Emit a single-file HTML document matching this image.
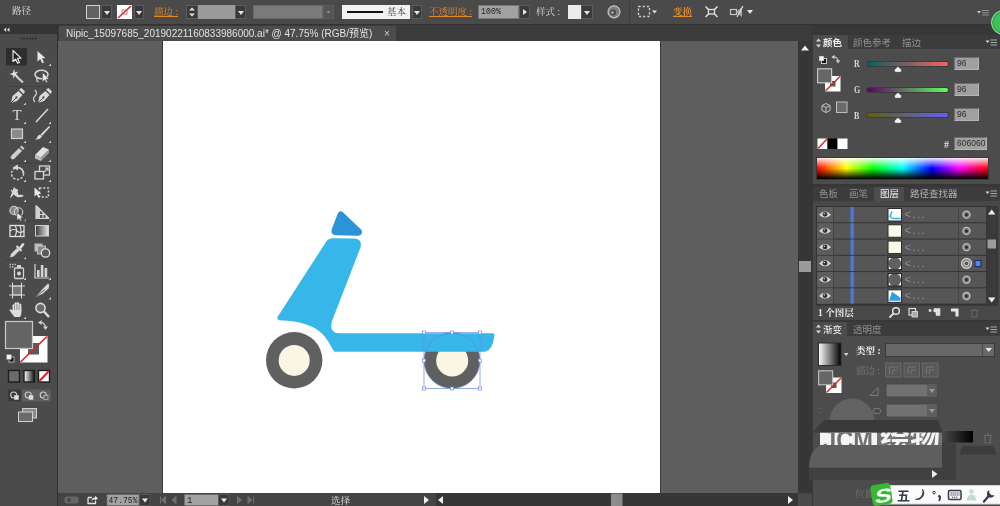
<!DOCTYPE html>
<html><head><meta charset="utf-8">
<style>
*{box-sizing:border-box;margin:0;padding:0}
html,body{width:1000px;height:506px;overflow:hidden;background:#3b3b3b;font-family:"Liberation Sans","Noto Sans CJK SC",sans-serif;font-size:11px;color:#ddd}
.a{position:absolute}
#top{left:0;top:0;width:1000px;height:25px;background:#4a4a4a;border-bottom:1px solid #333}
#tools{left:0;top:25px;width:57px;height:481px;background:#4b4b4b;box-shadow:1px 0 0 #2e2e2e}
#toolshead{left:0;top:25px;width:57px;height:9px;background:#353535}
#tabbar{left:58px;top:26px;width:754px;height:15px;background:#3b3b3b}
#tab{left:59px;top:26px;width:337px;height:15px;background:#4c4c4c}
#canvas{left:58px;top:41px;width:740px;height:452px;background:#5e5e5e}
#art{left:162px;top:41px;width:499px;height:452px;background:#fff;border-left:1px solid #3a3a3a;border-right:1px solid #3a3a3a}
#vscroll{left:798px;top:41px;width:14px;height:452px;background:#363636}
#status{left:58px;top:493px;width:754px;height:13px;background:#444}
#dock{left:812px;top:25px;width:188px;height:481px;background:#373737}
.panel{background:#4c4c4c}
.ptab{background:#3c3c3c}

.sw{position:absolute;top:5px;height:14px}
.dd{position:absolute;top:5px;height:14px;background:#3a3a3a;border:1px solid #5c5c5c}
.dd:after{content:"";position:absolute;left:50%;top:5px;margin-left:-3px;border:3px solid transparent;border-top:4px solid #e6e6e6;border-bottom:0}
.or{position:absolute;color:#e08a2e;text-decoration:underline;font-family:"Liberation Serif","Noto Serif CJK SC",serif;font-size:9.5px;line-height:14px;top:5px;white-space:nowrap}
.lt{position:absolute;color:#d8d8d8;font-family:"Liberation Serif","Noto Serif CJK SC",serif;font-size:9.5px;line-height:14px;white-space:nowrap}

.pt{position:absolute;font-size:9.5px;line-height:13px;white-space:nowrap;color:#909090}
.pt.on{color:#f0f0f0;font-weight:bold}
.vb{position:absolute;background:#a0a0a0;border:1px solid #6e6e6e;border-right-color:#b5b5b5;border-bottom-color:#b5b5b5;color:#2a2a2a;font-size:8.5px;line-height:11px;padding-left:2px}
.sl{position:absolute;left:867px;width:81px;height:4px;border-radius:2px;box-shadow:0 0 0 1px #3c3c3c}
.rgb{position:absolute;left:854px;font-family:"Liberation Serif",serif;font-size:10px;line-height:10px;color:#d8d8d8;font-weight:bold;transform:scaleX(.8);transform-origin:0 0}
</style></head><body>
<div id="wrap" style="position:absolute;left:0;top:0;width:1000px;height:506px;will-change:transform">
<div id="top" class="a"></div>
<div id="tools" class="a"></div>
<div id="toolshead" class="a"></div>
<div id="tabbar" class="a"></div>
<div id="tab" class="a"></div>
<div id="canvas" class="a"></div>
<div id="art" class="a"></div>
<div id="vscroll" class="a"></div>
<div id="status" class="a"></div>
<div id="dock" class="a"></div>

<!-- ART -->
<svg class="a" style="left:162px;top:41px" width="498" height="452" viewBox="162 41 498 452">
<circle cx="294.2" cy="360.2" r="28.2" fill="#606060"/><circle cx="294.2" cy="360.4" r="15.5" fill="#faf6e4"/>
<circle cx="452" cy="360.5" r="28" fill="#606060"/><circle cx="452.2" cy="360.5" r="16" fill="#faf6e4"/>
<path d="M332.5 238.3L354.5 238.5Q362.5 239 360.5 247.5L332 321Q329 332.5 338.5 333.2L493 333.2Q495 333.2 494.3 336Q493 350 485 351.7L334.5 351.8C326 340 324 322 279.5 320.3Q275.5 319.5 278.5 315.5L326 242Q328.5 238.3 332.5 238.3Z" fill="#37b6e9"/>
<path d="M338 213Q340.2 209.8 343.2 212.6L361 229.5Q363.5 232.5 360.5 235Q359.5 235.8 357.5 235.8L336.5 235.3Q330 234.8 331.8 229Z" fill="#2d93d8"/>
<circle cx="452" cy="360.5" r="28" fill="none" stroke="#5d82dc" stroke-width=".7" opacity=".8"/>
<rect x="424" y="332.5" width="56" height="56" fill="none" stroke="#6a8ce0" stroke-width=".7"/>
<rect x="422.5" y="331.0" width="3" height="3" fill="#fff" stroke="#6a8ce0" stroke-width=".7"/>
<rect x="450.5" y="331.0" width="3" height="3" fill="#fff" stroke="#6a8ce0" stroke-width=".7"/>
<rect x="478.5" y="331.0" width="3" height="3" fill="#fff" stroke="#6a8ce0" stroke-width=".7"/>
<rect x="422.5" y="359.0" width="3" height="3" fill="#fff" stroke="#6a8ce0" stroke-width=".7"/>
<rect x="478.5" y="359.0" width="3" height="3" fill="#fff" stroke="#6a8ce0" stroke-width=".7"/>
<rect x="422.5" y="387.0" width="3" height="3" fill="#fff" stroke="#6a8ce0" stroke-width=".7"/>
<rect x="450.5" y="387.0" width="3" height="3" fill="#fff" stroke="#6a8ce0" stroke-width=".7"/>
<rect x="478.5" y="387.0" width="3" height="3" fill="#fff" stroke="#6a8ce0" stroke-width=".7"/>
</svg>
<!-- /ART -->

<!-- STATUS -->
<svg class="a" style="left:58px;top:493px" width="754" height="13" viewBox="58 493 754 13">
<rect x="436" y="493" width="362" height="13" fill="#363636"/>
<rect x="64.5" y="496.5" width="14" height="7" rx="2" fill="#666"/><circle cx="69" cy="500" r="2" fill="#4a4a4a"/>
<path d="M88 497.5h4M88 497.5v6h7.5v-2.500" fill="none" stroke="#e0e0e0" stroke-width="1.3"/><path d="M91.500 501Q92 497.500 95 497.500V495.800L98 498.300L95 500.800V499.200Q93 499.200 91.500 501Z" fill="#e8e8e8"/>
<rect x="107" y="494.500" width="32" height="11" fill="#a2a2a2" stroke="#6a6a6a" stroke-width=".8"/>
<text x="108.500" y="503.300" font-family="Liberation Mono,monospace" font-size="9" fill="#222" textLength="29" lengthAdjust="spacingAndGlyphs">47.75%</text>
<rect x="139.500" y="494.500" width="10.500" height="11" fill="#3a3a3a" stroke="#5c5c5c" stroke-width=".8"/><path d="M142 498.500H148L145 502.500Z" fill="#eee"/>
<path d="M160.500 496.500V503.500M165.500 496.500L161.500 500L165.500 503.500ZM176 496.500L172 500L176 503.500Z" fill="#6e6e6e" stroke="#6e6e6e" stroke-width="1"/>
<rect x="184.500" y="494.500" width="34" height="11" fill="#a2a2a2" stroke="#6a6a6a" stroke-width=".8"/><text x="187" y="503.300" font-family="Liberation Mono,monospace" font-size="9" fill="#222">1</text>
<rect x="218.500" y="494.500" width="10.500" height="11" fill="#3a3a3a" stroke="#5c5c5c" stroke-width=".8"/><path d="M221 498.500H227L224 502.500Z" fill="#eee"/>
<path d="M237.500 496.500L241.500 500L237.500 503.500ZM248 496.500L252 500L248 503.500ZM253.500 496.500V503.500" fill="#6e6e6e" stroke="#6e6e6e" stroke-width="1"/>
<text x="331" y="503.500" font-family="Liberation Serif,Noto Serif CJK SC,serif" font-size="9.500" fill="#e0e0e0">选择</text>
<path d="M424 496L429 500L424 504Z" fill="#eee"/><path d="M443 496L438 500L443 504Z" fill="#eee"/>
<rect x="611" y="493.500" width="11.500" height="12.500" fill="#8c8c8c"/>
<path d="M788 496L793 500L788 504Z" fill="#eee"/><rect x="798" y="494" width="13.500" height="12" fill="#4a4a4a"/>
</svg>
<div class="a" style="left:799px;top:261px;width:11.5px;height:11px;background:#9a9a9a"></div>
<svg class="a" style="left:798px;top:41px" width="14" height="14"><path d="M3 9.500L7 4.500L11 9.500Z" fill="#eee"/></svg>
<!-- /STATUS -->
<!-- TOPBAR -->
<div class="a lt" style="left:12px;top:4px;font-size:9.5px;color:#e8e8e8">路径</div>
<div class="sw" style="left:86px;width:14px;background:#616161;border:1px solid #cfcfcf"></div>
<div class="dd" style="left:101px;width:11px"></div>
<svg class="a" style="left:117px;top:5px" width="15" height="14"><rect x="0" y="0" width="15" height="14" fill="#fff"/><line x1="1" y1="13" x2="14" y2="1" stroke="#d8232a" stroke-width="1.6"/><rect x="5" y="5" width="5" height="4" fill="none" stroke="#b55" stroke-width="0.8"/></svg>
<div class="dd" style="left:134px;width:10px"></div>
<div class="or" style="left:154px">描边 :</div>
<div class="a" style="left:186px;top:5px;width:12px;height:14px;background:#3a3a3a;border:1px solid #5c5c5c"></div>
<svg class="a" style="left:186px;top:5px" width="12" height="14"><path d="M3 5.5L6 2.5L9 5.5Z M3 8.5L6 11.5L9 8.5Z" fill="#e0e0e0"/></svg>
<div class="sw" style="left:198px;width:37px;background:#9a9a9a"></div>
<div class="dd" style="left:235px;width:11px"></div>
<div class="sw" style="left:253px;width:70px;background:#7b7b7b;border:1px solid #666"></div>
<svg class="a" style="left:323px;top:5px" width="11" height="14"><rect x=".5" y=".5" width="10" height="13" fill="#545454" stroke="#5c5c5c"/><path d="M3.500 6H7.500L5.500 8.500Z" fill="#8c8c8c"/></svg>
<div class="sw" style="left:342px;width:68px;height:14px;background:#f2f2f2"></div>
<div class="a" style="left:347px;top:11px;width:36px;height:2px;background:#111"></div>
<div class="a" style="left:387px;top:5px;font-family:'Liberation Serif','Noto Serif CJK SC',serif;font-size:9.5px;line-height:14px;color:#444">基本</div>
<div class="dd" style="left:412px;width:10px"></div>
<div class="or" style="left:429px">不透明度 :</div>
<div class="sw" style="left:478px;width:41px;background:#a2a2a2;border:1px solid #777;color:#222;font-family:'Liberation Mono',monospace;font-size:8.3px;line-height:11px;padding-left:2px">100%</div>
<div class="a" style="left:519px;top:5px;width:11px;height:14px;background:#3a3a3a;border:1px solid #5c5c5c"></div>
<svg class="a" style="left:519px;top:5px" width="11" height="14"><path d="M4 4L8 7L4 10Z" fill="#e6e6e6"/></svg>
<div class="a lt" style="left:536px;top:5px">样式 :</div>
<div class="sw" style="left:568px;width:13px;background:#ebebeb"></div>
<div class="dd" style="left:581px;width:12px"></div>
<svg class="a" style="left:606px;top:4px" width="16" height="16"><circle cx="8" cy="7.800" r="6" fill="#7e7e7e" stroke="#c4c4c4" stroke-width="1.200"/><circle cx="7" cy="8.500" r="3" fill="#4a4a4a"/><circle cx="6.500" cy="8.500" r="1.200" fill="#bbb"/></svg>
<div class="a" style="left:629px;top:2px;width:1px;height:20px;background:#3c3c3c"></div>
<svg class="a" style="left:637px;top:5px" width="24" height="14"><rect x="1.5" y="1.5" width="11" height="10" fill="none" stroke="#d0d0d0" stroke-width="1.4" stroke-dasharray="2.2 2"/><path d="M15 5.5L20 5.5L17.5 8.5Z" fill="#e6e6e6"/></svg>
<div class="or" style="left:673px;font-weight:bold">变换</div>
<svg class="a" style="left:704px;top:4px" width="16" height="16"><rect x="4.500" y="5.500" width="6" height="4.500" fill="none" stroke="#e0e0e0" stroke-width="1.300"/><path d="M1.500 2.500L4.500 5.500M13.500 2.500L10.500 5.500M1.500 13L4.500 10M13.500 13L10.500 10" stroke="#e0e0e0" stroke-width="1.500"/></svg>
<svg class="a" style="left:728px;top:4px" width="28" height="16"><rect x="2.5" y="5.5" width="6" height="5" fill="none" stroke="#c8c8c8" stroke-width="1.2"/><path d="M8 8L14 3L14 13Z" fill="#aaa"/><path d="M9 13L15 2" stroke="#ddd" stroke-width="1.2"/><path d="M19 6L25 6L22 10Z" fill="#e6e6e6"/></svg>
<svg class="a" style="left:975px;top:8px" width="16" height="10"><path d="M2 3L6 3L4 5.500Z" fill="#d0d0d0"/><path d="M7 2.500H14M7 4.800H14M7 7H14" stroke="#a4a4a4" stroke-width=".800"/></svg>
<div class="a" style="left:991px;top:10px;width:25px;height:25px;border-radius:13px;background:#3fc25a;border:1.500px solid #9be6a8;box-shadow:inset 0 0 0 1.500px #35a84c"></div>
<!-- /TOPBAR -->

<!-- TAB -->
<div id="tabtxt" class="a" style="left:66px;top:27px;font-size:10px;line-height:13px;color:#e2e2e2;white-space:nowrap">Nipic_15097685_20190221160833986000.ai* @ 47.75% (RGB/预览)</div>
<div class="a" style="left:384px;top:27px;font-size:10px;line-height:13px;color:#d0d0d0">×</div>
<!-- /TAB -->
<!-- TOOLS -->
<svg class="a" style="left:0;top:0" width="58" height="506" viewBox="0 0 58 506">
<rect x="6" y="48" width="21" height="17.5" fill="#2e2e2e"/>
<g transform="translate(17,57)"><path d="M-4 -6.5L-4 4.5L-1.3 2L0.6 6.3L2.4 5.5L0.5 1.3L4 1.2Z" fill="#222" stroke="#f0f0f0" stroke-width="1.1" stroke-linejoin="round"/></g>
<g transform="translate(42,57)"><path d="M-4.5 -6L-4.5 4.5L-1.8 2L0.2 6.3L2 5.5L0 1.3L3.5 1.2Z" fill="#e8e8e8"/></g><path d="M51 63.5L51 66L48.5 66Z" fill="#cfcfcf"/>
<g transform="translate(17,76)"><path d="M-1 0L6 6.5" stroke="#d4d4d4" stroke-width="2"/><path d="M-3 -7L-2 -3.6L1.5 -4.5L-1 -2L1.5 1L-2.2 -0.3L-3.5 3L-4 -0.8L-7.5 -2L-4.2 -3Z" fill="#e0e0e0"/></g>
<g transform="translate(42,76)"><ellipse cx="-0.5" cy="-1.5" rx="6.5" ry="4.2" fill="none" stroke="#d4d4d4" stroke-width="1.6"/><path d="M-5 1.5Q-6 5 -3.5 6" fill="none" stroke="#d4d4d4" stroke-width="1.3"/><path d="M0.5 -3.5L0.5 6L2.8 3.8L4.2 6.8L5.6 6L4.2 3.2L7 3Z" fill="#e8e8e8" stroke="#4b4b4b" stroke-width=".5"/></g>
<g transform="translate(17,96)"><path d="M-6 7L-4.5 0L1.5 -5L5.5 -1L0 5Z" fill="#d8d8d8"/><path d="M-6 7L-1 2" stroke="#4b4b4b" stroke-width="1"/><circle cx="-0.6" cy="1.4" r="1.1" fill="#4b4b4b"/><path d="M2 -6.5L4.5 -8L8 -4.5L6.5 -2Z" fill="#d8d8d8"/></g><path d="M26 102.5L26 105L23.5 105Z" fill="#cfcfcf"/>
<g transform="translate(42,96)"><g transform="translate(2,0)"><path d="M-6 7L-4.5 0L1.5 -5L5.5 -1L0 5Z" fill="#d8d8d8"/><path d="M-6 7L-1 2" stroke="#4b4b4b" stroke-width="1"/><circle cx="-0.6" cy="1.4" r="1.1" fill="#4b4b4b"/><path d="M2 -6.5L4.5 -8L8 -4.5L6.5 -2Z" fill="#d8d8d8"/></g><path d="M-7 -6Q-4 -3 -7 0T-7 6" fill="none" stroke="#d4d4d4" stroke-width="1.2"/></g>
<g transform="translate(17,115)"><text x="0" y="5" font-family="Liberation Serif,serif" font-size="15" fill="#dcdcdc" text-anchor="middle">T</text></g><path d="M26 121.5L26 124L23.5 124Z" fill="#cfcfcf"/>
<g transform="translate(42,115)"><path d="M-6 7L6 -6" stroke="#d8d8d8" stroke-width="1.5"/></g><path d="M51 121.5L51 124L48.5 124Z" fill="#cfcfcf"/>
<g transform="translate(17,134)"><rect x="-5.500" y="-5" width="11" height="9.500" fill="#8a8a8a" stroke="#d0d0d0" stroke-width="1.200"/></g><path d="M26 140.5L26 143L23.5 143Z" fill="#cfcfcf"/>
<g transform="translate(42,134)"><path d="M7 -8L8 -7L0 2L-1.5 0.5Z" fill="#dcdcdc"/><path d="M-1.8 0.8L0 2.6Q-2 6 -7 5.5Q-4.5 4.5 -4.5 2.5Q-3.5 0.5 -1.8 0.8Z" fill="#dcdcdc"/></g><path d="M51 140.5L51 143L48.5 143Z" fill="#cfcfcf"/>
<g transform="translate(17,153)"><path d="M-7 7L-6 3L2 -5L5 -2L-3 6Z" fill="#d0d0d0"/><path d="M3 -6L4.5 -7.5L7.5 -4.5L6 -3Z" fill="#d0d0d0"/><path d="M-7 7L-5.6 5.6" stroke="#333" stroke-width="1.5"/></g><path d="M26 159.5L26 162L23.5 162Z" fill="#cfcfcf"/>
<g transform="translate(42,153)"><path d="M-7 2L1 -6L7 -3.5L-1 4.5Z" fill="#e0e0e0"/><path d="M-7 2L-1 4.5L-1 8L-7 5.5Z" fill="#bdbdbd"/><path d="M-1 4.5L7 -3.5L7 0L-1 8Z" fill="#9a9a9a"/></g><path d="M51 159.5L51 162L48.5 162Z" fill="#cfcfcf"/>
<g transform="translate(17,173)"><circle cx="0.5" cy="0.5" r="6" fill="none" stroke="#d4d4d4" stroke-width="1.5" stroke-dasharray="2.2 1.6"/><path d="M0.5 -5.5A6 6 0 0 1 6.5 0.5" fill="none" stroke="#d4d4d4" stroke-width="1.6"/><path d="M-4.5 -5.5L1 -8.5L1 -2.5Z" fill="#d4d4d4"/></g><path d="M26 179.5L26 182L23.5 182Z" fill="#cfcfcf"/>
<g transform="translate(42,173)"><rect x="-2.5" y="-7" width="10" height="9" fill="none" stroke="#d4d4d4" stroke-width="1.3"/><rect x="-7" y="-1.5" width="8.5" height="7.5" fill="#4b4b4b" stroke="#d4d4d4" stroke-width="1.3"/><path d="M2 -1L5.5 -4.5M3 -5L6 -5L6 -2" stroke="#d4d4d4" stroke-width="1.1" fill="none"/></g><path d="M51 179.5L51 182L48.5 182Z" fill="#cfcfcf"/>
<g transform="translate(17,193)"><path d="M-7 5Q-5 -1 -3 -6Q-1 -3 1 -4Q0 0 2 2Q5 1 7 3Q3 5 0 4Q-2 2 -3 1Q-5 4 -7 5Z" fill="#d8d8d8"/><path d="M-6 -3Q-3 0 -1 3" stroke="#d8d8d8" stroke-width="1.2" fill="none"/></g><path d="M26 199.5L26 202L23.5 202Z" fill="#cfcfcf"/>
<g transform="translate(42,193)"><rect x="-2.5" y="-5" width="9" height="9" fill="none" stroke="#d4d4d4" stroke-width="1.5" stroke-dasharray="2 1.8"/><path d="M-7.5 -5.5L-7.5 3.5L-5.2 1.5L-3.8 4.5L-2.2 3.8L-3.6 1L-0.8 0.8Z" fill="#e8e8e8"/></g>
<g transform="translate(17,212.5)"><circle cx="-3" cy="-2" r="4.2" fill="#8a8a8a" stroke="#d0d0d0" stroke-width="1.1"/><circle cx="1.5" cy="-0.5" r="4.2" fill="none" stroke="#d0d0d0" stroke-width="1.1"/><path d="M0 0L0 8L2 6L3.4 9L5 8.2L3.6 5.5L6.2 5.2Z" fill="#e8e8e8" stroke="#4b4b4b" stroke-width=".5"/></g><path d="M26 219.0L26 221.5L23.5 221.5Z" fill="#cfcfcf"/>
<g transform="translate(42,212.5)"><path d="M-6 -7L-6 6L7 6M-6 -7L7 6M-2.5 -3.5L-2.5 6M1 0L1 6M4 3L4 6M-6 -2L-1 -2M-6 2L3 2" stroke="#d4d4d4" stroke-width="1.2" fill="none"/><path d="M-6 -7L-6 6L-2.5 6L-2.5 -3.5Z" fill="#cfcfcf"/></g><path d="M51 219.0L51 221.5L48.5 221.5Z" fill="#cfcfcf"/>
<g transform="translate(17,231)"><rect x="-7" y="-5.5" width="14" height="11" fill="#4a4a4a" stroke="#e0e0e0" stroke-width="1.3"/><path d="M-7 0Q-3 -3 0 0T7 0M-2 -5.5Q1 -1 -2 5.5M3 -5.5Q5 0 3 5.5" fill="none" stroke="#e0e0e0" stroke-width="1.1"/></g>
<defs><linearGradient id="tg" x1="0" x2="1"><stop offset="0" stop-color="#3a3a3a"/><stop offset="1" stop-color="#e8e8e8"/></linearGradient><linearGradient id="wb" x1="0" x2="1"><stop offset="0" stop-color="#fff"/><stop offset="1" stop-color="#111"/></linearGradient></defs>
<g transform="translate(42,231)"><rect x="-6.5" y="-5.5" width="13" height="10.5" fill="url(#tg)" stroke="#d0d0d0" stroke-width="1"/></g>
<g transform="translate(17,250.5)"><path d="M-7 7L-6 3.5L0 -2.5L2.5 0L-3.5 6Z" fill="#d8d8d8"/><path d="M-0.5 -4.5L4.5 0.5" stroke="#e0e0e0" stroke-width="2"/><path d="M2 -3L5 -7Q7 -8 7.5 -6L4 -1.5Z" fill="#e0e0e0"/></g><path d="M26 257.0L26 259.5L23.5 259.5Z" fill="#cfcfcf"/>
<g transform="translate(42,250.5)"><rect x="-7.5" y="-7" width="8" height="8" fill="#bcbcbc"/><rect x="-4.5" y="-4.5" width="8" height="8" fill="#8a8a8a" stroke="#d0d0d0" stroke-width=".8"/><circle cx="3.5" cy="2.5" r="4.2" fill="#5a5a5a" stroke="#e0e0e0" stroke-width="1.3"/></g>
<g transform="translate(17,271)"><rect x="-2.5" y="-3" width="9" height="10.5" rx="1" fill="#4b4b4b" stroke="#d4d4d4" stroke-width="1.3"/><circle cx="2" cy="2.5" r="2" fill="#d4d4d4"/><rect x="0" y="-6" width="4" height="3" fill="#d4d4d4"/><path d="M-7.5 -6.5h1.5M-5 -6.5h1.5M-7.5 -4h1.5M-5 -4h1.5M-2.5 -6.5h1.5" stroke="#bdbdbd" stroke-width="1.3"/></g><path d="M26 277.5L26 280L23.5 280Z" fill="#cfcfcf"/>
<g transform="translate(42,271)"><path d="M-7 -7L-7 7L7 7" fill="none" stroke="#d4d4d4" stroke-width="1.2"/><rect x="-5" y="-1" width="2.6" height="7" fill="#d4d4d4"/><rect x="-1.2" y="-6" width="2.6" height="12" fill="#d4d4d4"/><rect x="2.6" y="-3" width="2.6" height="9" fill="#d4d4d4"/></g><path d="M51 277.5L51 280L48.5 280Z" fill="#cfcfcf"/>
<g transform="translate(17,290.5)"><rect x="-4.5" y="-4.5" width="9" height="9" fill="#777" stroke="#d4d4d4" stroke-width="1.1"/><path d="M-8 -4.5H8M-8 4.5H8M-4.5 -8V8M4.5 -8V8" stroke="#d4d4d4" stroke-width="1.1"/></g>
<g transform="translate(42,290.5)"><path d="M-7 7L2 -3L6 -7Q8 -6 6.5 -2L1 3Z" fill="#d8d8d8"/><path d="M-7 7L3 -1" stroke="#4b4b4b" stroke-width=".8"/></g><path d="M51 297.0L51 299.5L48.5 299.5Z" fill="#cfcfcf"/>
<g transform="translate(17,310)"><path d="M-2.5 7Q-6 3 -7.5 0Q-6.5 -1.5 -4.5 0.5L-4.5 -5Q-3.5 -6.5 -2.6 -5L-2.4 -7Q-1.2 -8.3 -0.3 -7L-0.1 -7.5Q1.2 -8.5 2 -7L2.2 -6Q3.5 -7 4.3 -5.5L4.6 1Q4.5 5 3 7Z" fill="#dcdcdc"/><path d="M-2.5 -4.5V0M-0.2 -6.5V0M2.1 -5.5V0" stroke="#777" stroke-width=".7"/></g><path d="M26 316.5L26 319L23.5 319Z" fill="#cfcfcf"/>
<g transform="translate(42,310)"><circle cx="-1.5" cy="-2" r="4.6" fill="#6a6a6a" stroke="#dcdcdc" stroke-width="1.6"/><path d="M2 1.5L7 7" stroke="#dcdcdc" stroke-width="2.4"/></g>
<path d="M5 86.5H53" stroke="#424242" stroke-width="1"/>
<path d="M5 163H53" stroke="#424242" stroke-width="1"/>
<path d="M5 221H53" stroke="#424242" stroke-width="1"/>
<path d="M5 260H53" stroke="#424242" stroke-width="1"/>
<path d="M6.200 27.500L3.700 29.800L6.200 32.100ZM9.500 27.500L7 29.800L9.500 32.100Z" fill="#d8d8d8"/>
<path d="M20 38.5H37" stroke="#333" stroke-width="2" stroke-dasharray="2 1"/>
<rect x="20" y="336" width="27.5" height="26.5" fill="#fff"/><rect x="28" y="343" width="11" height="11.5" fill="#5a5a5a"/><path d="M20.5 362L47 336.5" stroke="#d8232a" stroke-width="1.6"/>
<rect x="5.5" y="321.5" width="27" height="27" fill="#646464" stroke="#c8c8c8" stroke-width="1.2"/>
<path d="M40 322.5Q44 322 45.5 327" fill="none" stroke="#d0d0d0" stroke-width="1.2"/><path d="M38 322.5L41.5 320L41.5 325Z M45.5 330L43 326.5L48 326.5Z" fill="#d0d0d0"/>
<rect x="9" y="357" width="5" height="5" fill="#111" stroke="#d0d0d0" stroke-width=".8"/><rect x="6.5" y="354.5" width="5" height="5" fill="#f4f4f4" stroke="#777" stroke-width=".5"/>
<rect x="8.5" y="370.5" width="11" height="11.5" fill="#6c6c6c" stroke="#1e1e1e" stroke-width="1.4"/>
<rect x="24" y="370.5" width="10.5" height="11.5" fill="url(#wb)" stroke="#1e1e1e" stroke-width="1.4"/>
<rect x="38.5" y="370.5" width="11" height="11.5" fill="#fff" stroke="#1e1e1e" stroke-width="1.4"/><path d="M39.5 381L48.5 371.5" stroke="#d8232a" stroke-width="2"/>
<rect x="8" y="389.5" width="43" height="12" fill="#5e5e5e"/><rect x="8" y="389.5" width="13.5" height="12" fill="#393939"/>
<circle cx="13.7" cy="395" r="3" fill="none" stroke="#d0d0d0" stroke-width="1.1"/><rect x="14.5" y="395.5" width="4" height="4" fill="#e0e0e0" stroke="#d0d0d0" stroke-width=".6"/>
<circle cx="28.2" cy="395" r="3" fill="none" stroke="#d0d0d0" stroke-width="1.1"/><rect x="29" y="395.5" width="4" height="4" fill="#e0e0e0" stroke="#d0d0d0" stroke-width=".6"/>
<circle cx="43.2" cy="395" r="3" fill="none" stroke="#d0d0d0" stroke-width="1.1"/><rect x="44" y="395.5" width="4" height="4" fill="#5e5e5e" stroke="#d0d0d0" stroke-width=".6"/>
<rect x="22.5" y="408.5" width="14" height="9.5" fill="#8a8a8a" stroke="#d0d0d0" stroke-width="1"/><rect x="18.5" y="412" width="14" height="9.5" fill="#6a6a6a" stroke="#d0d0d0" stroke-width="1"/>
</svg>
<!-- /TOOLS -->
<!-- panels -->
<div class="a ptab" style="left:813px;top:35px;width:187px;height:14px"></div>
<div class="a panel" style="left:813px;top:49px;width:187px;height:135px"></div>
<div class="a ptab" style="left:813px;top:187px;width:187px;height:14px"></div>
<div class="a panel" style="left:813px;top:201px;width:187px;height:119px;background:#484848"></div>
<div class="a ptab" style="left:813px;top:322px;width:187px;height:14px"></div>
<div class="a panel" style="left:813px;top:336px;width:187px;height:170px"></div>
<!-- COLOR -->
<div class="a panel" style="left:813px;top:35px;width:35px;height:14px"></div>
<svg class="a" style="left:815px;top:38px" width="7" height="10"><path d="M3.5 0.5L6 3.5H1ZM3.5 9.5L6 6.5H1Z" fill="#d8d8d8"/></svg>
<div class="pt on" style="left:823px;top:36px">颜色</div>
<div class="pt" style="left:853px;top:36px">颜色参考</div>
<div class="pt" style="left:902px;top:36px">描边</div>
<svg class="a" style="left:985px;top:39px" width="13" height="8"><path d="M0.5 1.5H4.5L2.5 4Z" fill="#d8d8d8"/><path d="M5.5 1H12M5.5 3.5H12M5.5 6H12" stroke="#a8a8a8" stroke-width="1.2"/></svg>
<svg class="a" style="left:816px;top:54px" width="36" height="60">
<rect x="5.5" y="4.5" width="5" height="5" fill="#111" stroke="#ddd" stroke-width=".9"/><rect x="3" y="2" width="5" height="5" fill="#f4f4f4" stroke="#666" stroke-width=".5"/>
<path d="M17.5 3Q21 2.5 22 6.5" fill="none" stroke="#d0d0d0" stroke-width="1.1"/><path d="M15.5 3L18.5 0.8V5.2ZM22 9.5L19.8 6.3H24.2Z" fill="#d0d0d0"/>
<rect x="9" y="22" width="15.5" height="15.5" fill="#fff"/><rect x="14" y="27" width="5.5" height="5.5" fill="#5a5a5a"/><path d="M9.5 37L24 22.5" stroke="#d8232a" stroke-width="1.5"/>
<rect x="1.6" y="14.8" width="14" height="14" fill="#666" stroke="#c8c8c8" stroke-width="1.2"/>
<path d="M10 49.5L14 51.5V56.5L10 58.5L6 56.5V51.5Z M6 51.5L10 53.5L14 51.5M10 53.5V58.5" fill="none" stroke="#c8c8c8" stroke-width="1"/>
<rect x="20.5" y="48" width="10.5" height="10.5" fill="#6a6a6a" stroke="#bdbdbd" stroke-width="1"/>
</svg>
<div class="rgb" style="top:59px">R</div>
<div class="rgb" style="top:85px">G</div>
<div class="rgb" style="top:111px">B</div>
<div class="sl" style="top:62px;background:linear-gradient(90deg,#006060,#ff6060)"></div>
<div class="sl" style="top:88px;background:linear-gradient(90deg,#600060,#60ff60)"></div>
<div class="sl" style="top:113px;background:linear-gradient(90deg,#606000,#6060ff)"></div>
<svg class="a" style="left:893px;top:66px" width="10" height="7"><path d="M5 0.300L8.600 3.800Q9.300 6.300 7 6.300H3Q0.700 6.300 1.400 3.800Z" fill="#f2f2f2" stroke="#3a3a3a" stroke-width=".7"/></svg><svg class="a" style="left:893px;top:92px" width="10" height="7"><path d="M5 0.300L8.600 3.800Q9.300 6.300 7 6.300H3Q0.700 6.300 1.400 3.800Z" fill="#f2f2f2" stroke="#3a3a3a" stroke-width=".7"/></svg><svg class="a" style="left:893px;top:117px" width="10" height="7"><path d="M5 0.300L8.600 3.800Q9.300 6.300 7 6.300H3Q0.700 6.300 1.400 3.800Z" fill="#f2f2f2" stroke="#3a3a3a" stroke-width=".7"/></svg>
<div class="vb" style="left:954px;top:57px;width:25px;height:13px">96</div>
<div class="vb" style="left:954px;top:83px;width:25px;height:13px">96</div>
<div class="vb" style="left:954px;top:108px;width:25px;height:13px">96</div>
<svg class="a" style="left:817px;top:138px" width="32" height="12"><rect x="0.5" y="0.5" width="10" height="10.5" fill="#fff"/><path d="M1 10.5L10 1" stroke="#d8232a" stroke-width="1.4"/><rect x="10.5" y="0.5" width="10" height="10.5" fill="#000"/><rect x="20.5" y="0.5" width="10" height="10.5" fill="#fff"/></svg>
<div class="a" style="left:944px;top:139px;font-family:'Liberation Serif',serif;font-size:10px;line-height:11px;color:#ddd;font-weight:bold">#</div>
<div class="vb" style="left:954px;top:137px;width:33px;height:13px;line-height:11px">606060</div>
<div class="a" style="left:817px;top:158px;width:171px;height:21px;background:linear-gradient(180deg,rgba(255,255,255,.9) 0%,rgba(255,255,255,0) 48%,rgba(0,0,0,0) 50%,rgba(0,0,0,1) 100%),linear-gradient(90deg,#f00 0%,#ff0 17%,#0f0 33%,#0ff 50%,#00f 67%,#f0f 83%,#f00 100%);box-shadow:0 0 0 1px #3a3a3a"></div>
<!-- /COLOR -->
<!-- LAYERS -->
<div class="a panel" style="left:874px;top:187px;width:30px;height:14px"></div>
<div class="pt" style="left:819px;top:187px">色板</div><div class="pt" style="left:849px;top:187px">画笔</div><div class="pt on" style="left:880px;top:187px;font-weight:normal">图层</div><div class="pt" style="left:910px;top:187px;color:#b0b0b0">路径查找器</div>
<svg class="a" style="left:985px;top:190px" width="13" height="8"><path d="M0.5 1.5H4.5L2.5 4Z" fill="#d8d8d8"/><path d="M5.5 1H12M5.5 3.5H12M5.5 6H12" stroke="#a8a8a8" stroke-width="1.2"/></svg>
<svg class="a" style="left:813px;top:200px" width="187" height="122" viewBox="813 200 187 122">
<rect x="816" y="206" width="182" height="99.6" fill="#333"/>
<rect x="817" y="207.00" width="169" height="15.27" fill="#565656"/>
<rect x="817" y="207.00" width="16" height="15.27" fill="#5d5d5d"/>
<rect x="833" y="207.00" width="1" height="15.27" fill="#444"/>
<rect x="958" y="207.00" width="1" height="15.27" fill="#444"/>
<rect x="850.5" y="207.00" width="3.2" height="15.27" fill="#4c78dc"/>
<path d="M819 214.63Q825 208.13 831 214.63Q825 220.13 819 214.63Z" fill="#d8d8d8"/><circle cx="825" cy="214.33" r="2.4" fill="#333"/><circle cx="824.3" cy="213.63" r=".7" fill="#ddd"/>
<rect x="888" y="208.50" width="13.5" height="12.5" fill="#fff" stroke="#2a2a2a" stroke-width="1"/><path d="M892 211.50L890 216.50Q891 218.50 894 218.50L900.5 218.50" fill="none" stroke="#36b1e6" stroke-width="1.6"/>
<text x="904.5" y="218.13" font-family="Liberation Sans,sans-serif" font-size="11" fill="#939393" letter-spacing="1.5">&lt;...</text>
<circle cx="966.5" cy="214.63" r="3.5" fill="#7a7a7a" stroke="#c0c0c0" stroke-width="1.3"/><circle cx="966.5" cy="214.63" r="1.5" fill="#2c2c2c"/>
<rect x="817" y="223.27" width="169" height="15.27" fill="#565656"/>
<rect x="817" y="223.27" width="16" height="15.27" fill="#5d5d5d"/>
<rect x="833" y="223.27" width="1" height="15.27" fill="#444"/>
<rect x="958" y="223.27" width="1" height="15.27" fill="#444"/>
<rect x="850.5" y="223.27" width="3.2" height="15.27" fill="#4c78dc"/>
<path d="M819 230.91Q825 224.41 831 230.91Q825 236.41 819 230.91Z" fill="#d8d8d8"/><circle cx="825" cy="230.60" r="2.4" fill="#333"/><circle cx="824.3" cy="229.91" r=".7" fill="#ddd"/>
<rect x="888" y="224.77" width="13.5" height="12.5" fill="#fbf9e8" stroke="#2a2a2a" stroke-width="1"/>
<text x="904.5" y="234.41" font-family="Liberation Sans,sans-serif" font-size="11" fill="#939393" letter-spacing="1.5">&lt;...</text>
<circle cx="966.5" cy="230.91" r="3.5" fill="#7a7a7a" stroke="#c0c0c0" stroke-width="1.3"/><circle cx="966.5" cy="230.91" r="1.5" fill="#2c2c2c"/>
<rect x="817" y="239.54" width="169" height="15.27" fill="#565656"/>
<rect x="817" y="239.54" width="16" height="15.27" fill="#5d5d5d"/>
<rect x="833" y="239.54" width="1" height="15.27" fill="#444"/>
<rect x="958" y="239.54" width="1" height="15.27" fill="#444"/>
<rect x="850.5" y="239.54" width="3.2" height="15.27" fill="#4c78dc"/>
<path d="M819 247.18Q825 240.68 831 247.18Q825 252.68 819 247.18Z" fill="#d8d8d8"/><circle cx="825" cy="246.88" r="2.4" fill="#333"/><circle cx="824.3" cy="246.18" r=".7" fill="#ddd"/>
<rect x="888" y="241.04" width="13.5" height="12.5" fill="#fbf9e8" stroke="#2a2a2a" stroke-width="1"/>
<text x="904.5" y="250.68" font-family="Liberation Sans,sans-serif" font-size="11" fill="#939393" letter-spacing="1.5">&lt;...</text>
<circle cx="966.5" cy="247.18" r="3.5" fill="#7a7a7a" stroke="#c0c0c0" stroke-width="1.3"/><circle cx="966.5" cy="247.18" r="1.5" fill="#2c2c2c"/>
<rect x="817" y="255.81" width="169" height="15.27" fill="#565656"/>
<rect x="817" y="255.81" width="16" height="15.27" fill="#5d5d5d"/>
<rect x="833" y="255.81" width="1" height="15.27" fill="#444"/>
<rect x="958" y="255.81" width="1" height="15.27" fill="#444"/>
<rect x="850.5" y="255.81" width="3.2" height="15.27" fill="#4c78dc"/>
<path d="M819 263.44Q825 256.94 831 263.44Q825 268.94 819 263.44Z" fill="#d8d8d8"/><circle cx="825" cy="263.14" r="2.4" fill="#333"/><circle cx="824.3" cy="262.44" r=".7" fill="#ddd"/>
<rect x="888" y="257.31" width="13.5" height="12.5" fill="#fff" stroke="#2a2a2a" stroke-width="1"/><circle cx="894.75" cy="263.56" r="6.4" fill="#606060"/><rect x="888" y="257.31" width="13.5" height="12.5" fill="none" stroke="#2a2a2a" stroke-width="1"/>
<text x="904.5" y="266.94" font-family="Liberation Sans,sans-serif" font-size="11" fill="#939393" letter-spacing="1.5">&lt;...</text>
<circle cx="966.5" cy="263.44" r="5" fill="#8a8a8a" stroke="#cfcfcf" stroke-width="1.2"/><circle cx="966.5" cy="263.44" r="2.4" fill="#555" stroke="#d8d8d8" stroke-width="1"/>
<rect x="975" y="260.44" width="6" height="6.2" fill="#4f86f7" stroke="#1d2b55" stroke-width="1"/>
<rect x="817" y="272.08" width="169" height="15.27" fill="#565656"/>
<rect x="817" y="272.08" width="16" height="15.27" fill="#5d5d5d"/>
<rect x="833" y="272.08" width="1" height="15.27" fill="#444"/>
<rect x="958" y="272.08" width="1" height="15.27" fill="#444"/>
<rect x="850.5" y="272.08" width="3.2" height="15.27" fill="#4c78dc"/>
<path d="M819 279.72Q825 273.22 831 279.72Q825 285.22 819 279.72Z" fill="#d8d8d8"/><circle cx="825" cy="279.42" r="2.4" fill="#333"/><circle cx="824.3" cy="278.72" r=".7" fill="#ddd"/>
<rect x="888" y="273.58" width="13.5" height="12.5" fill="#fff" stroke="#2a2a2a" stroke-width="1"/><circle cx="894.75" cy="279.83" r="6.4" fill="#606060"/><rect x="888" y="273.58" width="13.5" height="12.5" fill="none" stroke="#2a2a2a" stroke-width="1"/>
<text x="904.5" y="283.22" font-family="Liberation Sans,sans-serif" font-size="11" fill="#939393" letter-spacing="1.5">&lt;...</text>
<circle cx="966.5" cy="279.72" r="3.5" fill="#7a7a7a" stroke="#c0c0c0" stroke-width="1.3"/><circle cx="966.5" cy="279.72" r="1.5" fill="#2c2c2c"/>
<rect x="817" y="288.35" width="169" height="15.27" fill="#565656"/>
<rect x="817" y="288.35" width="16" height="15.27" fill="#5d5d5d"/>
<rect x="833" y="288.35" width="1" height="15.27" fill="#444"/>
<rect x="958" y="288.35" width="1" height="15.27" fill="#444"/>
<rect x="850.5" y="288.35" width="3.2" height="15.27" fill="#4c78dc"/>
<path d="M819 295.99Q825 289.49 831 295.99Q825 301.49 819 295.99Z" fill="#d8d8d8"/><circle cx="825" cy="295.69" r="2.4" fill="#333"/><circle cx="824.3" cy="294.99" r=".7" fill="#ddd"/>
<rect x="888" y="289.85" width="13.5" height="12.5" fill="#fff" stroke="#2a2a2a" stroke-width="1"/><path d="M889 300.85L892 291.85L900.5 297.85L900.5 300.85Z" fill="#2f9fe0"/>
<text x="904.5" y="299.49" font-family="Liberation Sans,sans-serif" font-size="11" fill="#939393" letter-spacing="1.5">&lt;...</text>
<circle cx="966.5" cy="295.99" r="3.5" fill="#7a7a7a" stroke="#c0c0c0" stroke-width="1.3"/><circle cx="966.5" cy="295.99" r="1.5" fill="#2c2c2c"/>
<rect x="986.5" y="207" width="10.5" height="97.6" fill="#3a3a3a"/>
<path d="M988 214.5L991.7 209.5L995.4 214.5Z" fill="#f0f0f0"/><path d="M988 297.5L991.7 302.5L995.4 297.5Z" fill="#f0f0f0"/>
<rect x="987.5" y="239.5" width="8.5" height="9" fill="#9c9c9c"/>
<circle cx="896" cy="311" r="3.3" fill="none" stroke="#e0e0e0" stroke-width="1.5"/><path d="M893.5 313.5L889.5 317.5" stroke="#e0e0e0" stroke-width="1.8"/>
<rect x="909" y="308.5" width="6.5" height="6.5" fill="none" stroke="#e0e0e0" stroke-width="1.2"/><rect x="912" y="311.5" width="5.5" height="5.5" fill="#aaa" stroke="#e0e0e0" stroke-width=".8"/>
<path d="M929 309.5h2v2h-2zM932.5 310.5h2M934 308.5h6v7h-4v-3.5h-2z" fill="#e0e0e0" stroke="#e0e0e0" stroke-width=".6"/>
<path d="M951 308.5h7.5v8h-3v-5h-4.5z" fill="#e8e8e8"/>
<path d="M970.5 310.5h8M972 310.5v6.5h5v-6.5M973.5 309h2" fill="none" stroke="#666" stroke-width="1.1"/>
<text x="818" y="316" font-family="Liberation Serif,Noto Serif CJK SC,serif" font-size="9.5" font-weight="bold" fill="#eaeaea">1 个图层</text>
</svg>
<!-- /LAYERS -->
<!-- GRAD -->
<div class="a panel" style="left:813px;top:322px;width:34px;height:14px"></div>
<svg class="a" style="left:815px;top:324px" width="7" height="10"><path d="M3.5 0.5L6 3.5H1ZM3.5 9.5L6 6.5H1Z" fill="#d8d8d8"/></svg>
<div class="pt on" style="left:823px;top:323px;font-weight:normal">渐变</div><div class="pt" style="left:853px;top:323px">透明度</div>
<svg class="a" style="left:985px;top:326px" width="13" height="8"><path d="M0.5 1.5H4.5L2.5 4Z" fill="#d8d8d8"/><path d="M5.5 1H12M5.5 3.5H12M5.5 6H12" stroke="#a8a8a8" stroke-width="1.2"/></svg>
<svg class="a" style="left:800px;top:337px" width="200" height="169" viewBox="800 337 200 169">
<defs><linearGradient id="g1" x1="0" x2="1"><stop offset="0" stop-color="#fff"/><stop offset="1" stop-color="#000"/></linearGradient><linearGradient id="g2" x1="0" x2="1"><stop offset="0" stop-color="#4a4a4a"/><stop offset="1" stop-color="#000"/></linearGradient></defs>
<rect x="818.5" y="343" width="22.5" height="22.5" fill="url(#g1)" stroke="#2a2a2a" stroke-width="1"/>
<path d="M844 353H848.5L846.2 356Z" fill="#d8d8d8"/>
<text x="856" y="353.5" font-family="Liberation Serif,Noto Serif CJK SC,serif" font-size="9.5" font-weight="bold" fill="#f0f0f0">类型 :</text>
<rect x="885.5" y="343.500" width="109" height="13" fill="#676767" stroke="#3c3c3c" stroke-width="1"/><path d="M982.500 344V356" stroke="#4a4a4a" stroke-width="1"/><path d="M985.500 348H992L988.800 352Z" fill="#e8e8e8"/>
<text x="856" y="374" font-family="Liberation Serif,Noto Serif CJK SC,serif" font-size="9.5" fill="#7c7c7c">描边 :</text>
<rect x="885.5" y="363" width="15.5" height="14" fill="#585858" stroke="#6a6a6a" stroke-width="1"/><path d="M889.5 374V367H897.5M892.5 374V370H897.5" fill="none" stroke="#757575" stroke-width="1"/>
<rect x="904" y="363" width="15.5" height="14" fill="#585858" stroke="#6a6a6a" stroke-width="1"/><path d="M908 374V367H916M911 374V370H916" fill="none" stroke="#757575" stroke-width="1"/>
<rect x="922.5" y="363" width="15.5" height="14" fill="#585858" stroke="#6a6a6a" stroke-width="1"/><path d="M926.5 374V367H934.5M929.5 374V370H934.5" fill="none" stroke="#757575" stroke-width="1"/>
<rect x="826" y="377.5" width="15.5" height="15.5" fill="#fff"/><rect x="831" y="382.5" width="5.5" height="5.5" fill="#5a5a5a"/><path d="M826.5 392.5L841 378" stroke="#d8232a" stroke-width="1.5"/>
<rect x="818.6" y="370.8" width="14" height="14" fill="#666" stroke="#b8b8b8" stroke-width="1.2"/>
<path d="M870 395.5L878 387.5V395.5Z" fill="none" stroke="#7a7a7a" stroke-width="1"/>
<rect x="886" y="384" width="51" height="13" fill="#717171" stroke="#484848" stroke-width="1"/><rect x="927" y="384.5" width="9.5" height="12" fill="#5e5e5e"/><path d="M929 389H935L932 393Z" fill="#9a9a9a"/>
<ellipse cx="877" cy="411" rx="4" ry="2.8" fill="none" stroke="#7a7a7a" stroke-width="1"/>
<rect x="886" y="404" width="51" height="13" fill="#717171" stroke="#484848" stroke-width="1"/><rect x="927" y="404.5" width="9.5" height="12" fill="#5e5e5e"/><path d="M929 409H935L932 413Z" fill="#9a9a9a"/>
<text x="818" y="413" font-family="Liberation Sans,sans-serif" font-size="9" fill="#6a6a6a">::</text>
<circle cx="852" cy="421" r="22.5" fill="#626262"/>
<path d="M824 420L938 420L943 432.5L812.5 432.5Z" fill="#3a3a3a"/>
<svg x="820" y="432.5" width="122" height="12.5" viewBox="820 432.5 122 12.500" overflow="hidden">
<rect x="820" y="432.500" width="122" height="12.500" fill="#727272"/>
<rect x="820" y="432.500" width="57" height="12.500" fill="#f4f4f4"/>
<text x="823" y="450" font-family="Liberation Sans,sans-serif" font-size="30" font-weight="bold" fill="#707070" textLength="50" lengthAdjust="spacingAndGlyphs">JCM</text>
<text x="880" y="449" font-family="Liberation Sans,Noto Sans CJK SC,sans-serif" font-size="28" font-weight="bold" fill="#f4f4f4" textLength="60" lengthAdjust="spacingAndGlyphs">绘物</text>
</svg>
<rect x="942" y="431" width="31" height="11.5" fill="url(#g2)"/>
<path d="M983.5 435.5h8.5M985 435.5v7.5h5.5v-7.5M986.5 434h2.5" fill="none" stroke="#6a6a6a" stroke-width="1.2"/>
<path d="M822 445H942V468H809Q809 449 822 445Z" fill="#5e5e5e"/>
<rect x="809" y="467.7" width="133" height="12" fill="#404040"/><path d="M932 470L937.5 474L932 478Z" fill="#f0f0f0"/>
<rect x="942" y="442.5" width="14" height="37.5" fill="#3f3f3f"/>
<path d="M963 446H993L997 454.7H959Z" fill="#3c3c3c"/>
<rect x="956" y="454.7" width="44" height="25.3" fill="#4b4b4b"/>
<text x="855" y="496.5" font-family="Liberation Serif,Noto Serif CJK SC,serif" font-size="9.5" fill="#7a7a7a">位置</text>
<rect x="874" y="485.500" width="130" height="18.500" rx="3" fill="#fbfbfb" stroke="#cfd6dc" stroke-width="1"/>
<g transform="rotate(-9 881.500 494.500)"><rect x="871.500" y="484" width="20" height="21" rx="3.500" fill="#35b934"/><text transform="translate(881.500 502.500) scale(1.350 1) skewX(-12)" font-family="Liberation Sans,sans-serif" font-size="19" font-weight="bold" fill="#fff" text-anchor="middle">S</text></g>
<text x="903.500" y="500" font-family="Liberation Sans,Noto Sans CJK SC,sans-serif" font-size="13" font-weight="bold" fill="#333a52" text-anchor="middle">五</text>
<path d="M922.500 489.300A6.400 6.400 0 0 1 915.500 499.300A7.500 7.500 0 0 0 922.500 489.300Z" fill="#333a52" stroke="#333a52" stroke-width=".8" stroke-linejoin="round"/>
<circle cx="934" cy="492.500" r="1.300" fill="none" stroke="#333a52" stroke-width="1"/><path d="M939.500 496.500Q941 498.500 938.800 500.800" fill="none" stroke="#333a52" stroke-width="1.700"/><circle cx="939.300" cy="496.200" r="1.300" fill="#333a52"/>
<rect x="948.500" y="490.500" width="12.500" height="9" rx="1.200" fill="none" stroke="#333a52" stroke-width="1.500"/><path d="M950.500 493h9M950.500 495h9M952 497.200h5.500" stroke="#333a52" stroke-width="1.100" stroke-dasharray="1.300 .700"/>
<circle cx="971.500" cy="491.500" r="2.300" fill="#c4dcd6"/><path d="M967 500.500Q967 494.500 971.500 494.500Q976 494.500 976 500.500Z" fill="#c4dcd6"/>
<path d="M984 501.500L989.500 495" stroke="#333a52" stroke-width="2.300" stroke-linecap="round"/><path d="M989.200 490A4 4 0 1 0 994.500 495.300L991.300 495.200L989.300 493Z" fill="#333a52"/>
</svg>
<!-- /GRAD -->
</div>
</body></html>
